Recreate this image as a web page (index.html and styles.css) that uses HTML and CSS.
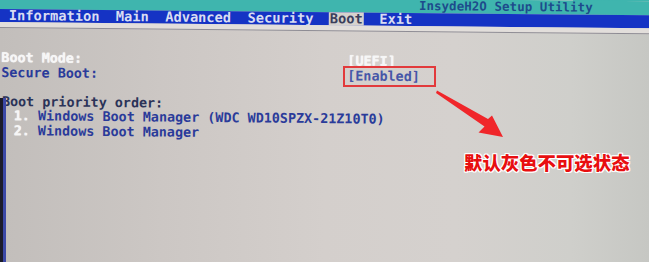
FILE: index.html
```html
<!DOCTYPE html>
<html lang="zh-CN">
<head>
<meta charset="utf-8">
<title>InsydeH2O Setup Utility - Boot</title>
<link rel="stylesheet" href="styles.css">
</head>
<body>
<div class="page">
  <div class="screen">
    <header class="top">
      <div class="titlebar"><span class="title">InsydeH2O Setup Utility</span></div>
      <nav class="menu">
        <span class="tab">Information</span>
        <span class="tab">Main</span>
        <span class="tab">Advanced</span>
        <span class="tab">Security</span>
        <span class="tab active">Boot</span>
        <span class="tab">Exit</span>
      </nav>
      <div class="rule"></div>
    </header>
    <main class="content">
      <div class="row"><span class="label white">Boot Mode:</span><span class="val white">[UEFI]</span></div>
      <div class="row"><span class="label blue">Secure Boot:</span><span class="val lblue">[Enabled]</span></div>
      <div class="row"></div>
      <div class="heading">Boot priority order:</div>
      <div class="item"><span class="white">1.</span> <span class="blue">Windows Boot Manager (WDC WD10SPZX-21Z10T0)</span></div>
      <div class="item"><span class="white">2.</span> <span class="blue">Windows Boot Manager</span></div>
    </main>
  </div>
  <div class="edge"></div>
  <div class="redbox"></div>
  <svg class="arrow" width="649" height="262" viewBox="0 0 649 262">
    <polygon points="437,90.5 488,119 492,115.5 503,137 478.5,132.5 484.5,126.5 436,93" fill="#f0262a"/>
  </svg>
  <div class="note">默认灰色不可选状态</div>
</div>
</body>
</html>
```

FILE: styles.css
```css
html, body {
  margin: 0;
  padding: 0;
  background: #3cb2ac;
}
.page {
  position: relative;
  width: 649px;
  height: 262px;
  overflow: hidden;
  background: linear-gradient(90deg, #c2bebb 0%, #ccc7c4 25%, #d4cfcc 50%, #d5d1ce 70%, #cfcfcb 88%, #c6c7c3 100%);
  font-family: "DejaVu Sans Mono", "Liberation Mono", monospace;
}
.screen {
  transform: rotate(0.55deg);
  transform-origin: 0 0;
  margin-top: -5px;
  width: 680px;
  box-shadow: 0 -20px 0 #3fb5ae;
}
.top {
  display: flex;
  flex-direction: column;
}
.titlebar {
  height: 14px;
  background: #3fb5ae;
  display: flex;
  align-items: flex-start;
  padding-left: 419px;
}
.title {
  font-size: 12.4px;
  font-weight: bold;
  color: #1d4b8c;
  line-height: 12px;
  margin-top: 1px;
  letter-spacing: 0.1px;
}
.menu {
  height: 13px;
  background: #1533c4;
  display: flex;
  align-items: stretch;
  gap: 16.4px;
  padding-left: 9px;
}
.tab {
  font-size: 13.7px;
  font-weight: bold;
  line-height: 13px;
  color: #d9ddf2;
}
.tab.active {
  background: #d6d2ce;
  color: #3a3e5c;
  padding: 0 1px;
  margin: 0 -1px;
}
.rule {
  height: 5px;
  background: #e2dedb;
  border-bottom: 1px solid #8e8c94;
}
.content {
  padding: 23px 0 0 2px;
  font-size: 13.4px;
  font-weight: bold;
  line-height: 14.5px;
}
.row {
  display: grid;
  grid-template-columns: 346px auto;
  height: 14.5px;
}
.heading {
  color: #2b3358;
  padding-left: 1px;
}
.item {
  padding-left: 13px;
}
.white { color: #f6f6f6; text-shadow: 0 0 1px #fff; }
.blue { color: #2a3b9a; }
.lblue { color: #4656a8; }
.edge {
  position: absolute;
  left: 0;
  top: 98px;
  width: 3px;
  height: 170px;
  background: #1b1b2a;
  border-right: 3px solid #3b48a6;
}
.redbox {
  position: absolute;
  left: 343px;
  top: 66px;
  width: 89px;
  height: 17px;
  border: 2px solid #e23a3c;
}
.arrow {
  position: absolute;
  left: 0;
  top: 0;
}
.note {
  position: absolute;
  left: 464px;
  top: 151px;
  font-family: "Noto Sans CJK SC", sans-serif;
  font-weight: 900;
  font-size: 18.4px;
  line-height: 22px;
  color: #e80e10;
  text-shadow: 1px 0 0 #fff, -1px 0 0 #fff, 0 1px 0 #fff, 0 -1px 0 #fff, 1px 1px 0 #fff, -1px -1px 0 #fff, 1px -1px 0 #fff, -1px 1px 0 #fff;
}
```
